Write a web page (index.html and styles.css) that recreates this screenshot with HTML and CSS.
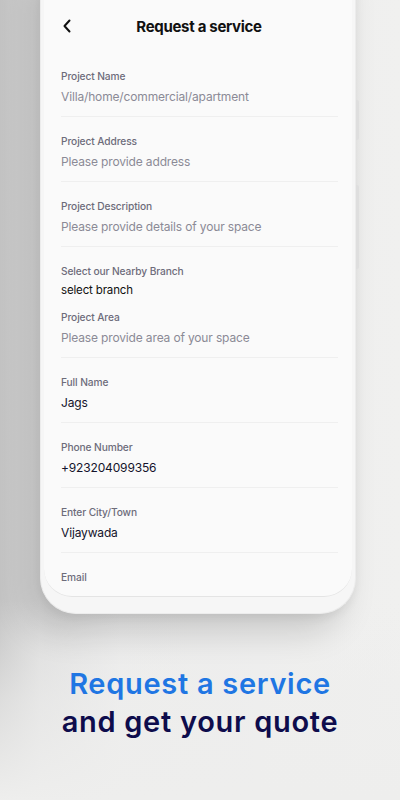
FILE: index.html
```html
<!DOCTYPE html>
<html>
<head>
<meta charset="utf-8">
<link rel="stylesheet" href="styles.css">
</head>
<body>
<div class="page">
  <div class="phone">
    <span class="btn btn-a"></span>
    <span class="btn btn-b"></span>
    <div class="screen">
      <div class="header">
        <svg class="back" width="10" height="14" viewBox="0 0 10 14"><polyline points="7.5,1.5 2.5,7 7.5,12.5" fill="none" stroke="#111" stroke-width="2" stroke-linecap="round" stroke-linejoin="round"/></svg>
        <div class="title">Request a service</div>
        <span class="spacer"></span>
      </div>
      <div class="field"><div class="label">Project Name</div><div class="value ph">Villa/home/commercial/apartment</div></div>
      <div class="field"><div class="label">Project Address</div><div class="value ph">Please provide address</div></div>
      <div class="field"><div class="label">Project Description</div><div class="value ph">Please provide details of your space</div></div>
      <div class="field field-open"><div class="label">Select our Nearby Branch</div><div class="value small">select branch</div></div>
      <div class="field field-tight"><div class="label">Project Area</div><div class="value ph">Please provide area of your space</div></div>
      <div class="field"><div class="label">Full Name</div><div class="value">Jags</div></div>
      <div class="field"><div class="label">Phone Number</div><div class="value">+923204099356</div></div>
      <div class="field"><div class="label">Enter City/Town</div><div class="value">Vijaywada</div></div>
      <div class="field"><div class="label">Email</div><div class="value ph"></div></div>
    </div>
  </div>
  <div class="caption">
    <div class="line1">Request a service</div>
    <div class="line2">and get your quote</div>
  </div>
</div>
</body>
</html>
```

FILE: styles.css
```css
html, body {
  margin: 0;
  padding: 0;
}
body {
  width: 400px;
  height: 800px;
  overflow: hidden;
  background: linear-gradient(90deg, #c4c4c4 0px, #dcdcdc 40px, #ececec 120px, #f0f0ef 400px);
  font-family: Inter, "Noto Sans", sans-serif;
}
.page {
  width: 400px;
  height: 800px;
  overflow: hidden;
  background: linear-gradient(180deg, rgba(240,240,239,0) 0px, rgba(240,240,239,0) 600px, rgba(238,238,237,0.6) 700px, #eeeeed 800px);
}
.phone {
  position: relative;
  margin: -40px 0 0 40px;
  width: 316px;
  height: 654px;
  box-sizing: border-box;
  padding: 0 3px 17px 3px;
  background: #f6f6f6;
  border: 1px solid #ececec;
  border-top: none;
  border-radius: 0 0 36px 36px;
  box-shadow: -14px 18px 34px rgba(0,0,0,0.16), 0 4px 10px rgba(0,0,0,0.06);
}
.btn {
  position: absolute;
  right: -4px;
  width: 3px;
  background: #dedede;
  border-radius: 0 2px 2px 0;
}
.btn-a { top: 140px; height: 40px; }
.btn-b { top: 225px; height: 84px; }
.screen {
  height: 637px;
  box-sizing: border-box;
  background: #fafafa;
  border-bottom: 1px solid #e4e4e4;
  border-radius: 0 0 28px 28px;
  padding: 40px 14px 0 17px;
  overflow: hidden;
}
.header {
  height: 52px;
  display: flex;
  align-items: center;
  justify-content: space-between;
}
.back {
  display: block;
  margin-left: 1px;
}
.title {
  font-size: 15px;
  font-weight: 700;
  color: #111111;
  letter-spacing: -0.3px;
  margin-right: 2px;
}
.spacer {
  width: 10px;
}
.field {
  padding: 17px 0 10px 0;
  border-bottom: 1px solid #efefef;
}
.field-open {
  border-bottom: none;
  padding-bottom: 0;
}
.field-tight {
  padding-top: 11px;
}
.label {
  font-size: 10.2px;
  line-height: 14px;
  font-weight: 500;
  color: #6d6c7a;
  letter-spacing: -0.1px;
}
.value {
  margin-top: 5px;
  font-size: 12px;
  line-height: 18px;
  height: 18px;
  color: #14132b;
  letter-spacing: -0.15px;
}
.value.ph {
  color: #8b8a96;
}
.value.small {
  font-size: 11.5px;
  margin-top: 3px;
  color: #111;
}
.caption {
  margin-top: 51px;
  text-align: center;
  font-weight: 600;
  font-size: 29px;
  line-height: 38px;
  letter-spacing: 0.7px;
}
.line1 {
  color: #1f76e3;
}
.line2 {
  color: #0e0c4c;
}
```
